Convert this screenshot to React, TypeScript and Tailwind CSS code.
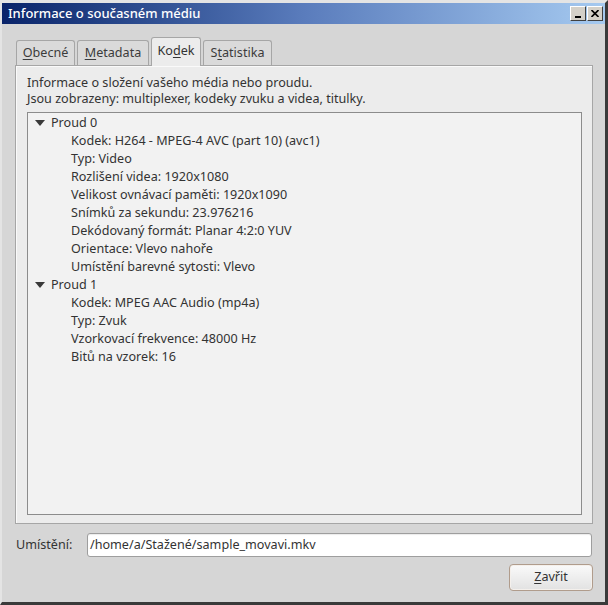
import React from "react";

const font = { fontFamily: '"Noto Sans", "DejaVu Sans", sans-serif' };

function Tab({ label, selected }: { label: [string, string, string]; selected?: boolean }) {
  const [a, b, c] = label;
  if (selected) {
    return (
      <div className="relative z-10 flex h-[29px] w-[50px] items-center justify-center rounded-t-[3px] border border-b-0 border-[#a6a6a6] bg-[#ececec] pb-[2px] text-[#333]">
        <span>
          {a}
          <span className="underline underline-offset-2">{b}</span>
          {c}
        </span>
      </div>
    );
  }
  return (
    <div className="flex h-[26px] items-center justify-center rounded-t-[3px] border border-b-0 border-[#a6a6a6] bg-[#dadada] px-[6px] text-[#3c3c3c]">
      <span>
        {a}
        <span className="underline underline-offset-2">{b}</span>
        {c}
      </span>
    </div>
  );
}

function Tri() {
  return (
    <svg width="10" height="6" viewBox="0 0 10 6" className="mr-[6px]">
      <path d="M0 0 L10 0 L5 6 Z" fill="#3a3a3a" />
    </svg>
  );
}

const stream0 = [
  "Kodek: H264 - MPEG-4 AVC (part 10) (avc1)",
  "Typ: Video",
  "Rozlišení videa: 1920x1080",
  "Velikost ovnávací paměti: 1920x1090",
  "Snímků za sekundu: 23.976216",
  "Dekódovaný formát: Planar 4:2:0 YUV",
  "Orientace: Vlevo nahoře",
  "Umístění barevné sytosti: Vlevo",
];
const stream1 = [
  "Kodek: MPEG AAC Audio (mp4a)",
  "Typ: Zvuk",
  "Vzorkovací frekvence: 48000 Hz",
  "Bitů na vzorek: 16",
];

export default function App() {
  return (
    <div
      style={font}
      className="flex h-[605px] w-[608px] flex-col border-b-[3px] border-l-[2px] border-r-[3px] border-t-[3px] border-b-[#3a3a3a] border-l-[#e4e4e4] border-r-[#3a3a3a] border-t-[#e4e4e4] bg-[#d6d6d6] text-[12.6px] text-[#333]"
    >
      {/* title bar */}
      <div className="flex h-[21px] shrink-0 items-center justify-between bg-gradient-to-r from-[#0a246a] via-[#5a7cbc] to-[#a6caf0] pl-[6px] pr-[2px]">
        <span className="text-[13px] font-medium leading-none text-white">Informace o současném médiu</span>
        <div className="flex gap-[1px]">
          <div className="flex h-[15px] w-[16px] items-end justify-center border border-b-[#404040] border-l-white border-r-[#404040] border-t-white bg-[#d4d0c8] pb-[2px]">
            <div className="h-[2px] w-[6px] bg-black" />
          </div>
          <div className="flex h-[15px] w-[16px] items-center justify-center border border-b-[#404040] border-l-white border-r-[#404040] border-t-white bg-[#d4d0c8]">
            <svg width="8" height="7" viewBox="0 0 8 7">
              <path d="M0.5 0 L7.5 7 M7.5 0 L0.5 7" stroke="black" strokeWidth="1.6" />
            </svg>
          </div>
        </div>
      </div>

      {/* body */}
      <div className="flex flex-1 flex-col pl-[13px] pr-[12px] pt-[13px]">
        <div className="flex items-end gap-[2px] pl-[1px]">
          <div className="w-[59px]">
            <Tab label={["", "O", "becné"]} />
          </div>
          <div className="w-[72px]">
            <Tab label={["", "M", "etadata"]} />
          </div>
          <Tab label={["Ko", "d", "ek"]} selected />
          <div className="w-[69px]">
            <Tab label={["S", "t", "atistika"]} />
          </div>
        </div>
        <div className="-mt-[1px] flex h-[459px] flex-col border border-[#a6a6a6] bg-[#ececec] pb-[8px] pl-[11px] pr-[10px] pt-[9px] shadow-[inset_1px_1px_0_#fafafa]">
          <div className="leading-[16px]">
            <div>Informace o složení vašeho média nebo proudu.</div>
            <div>Jsou zobrazeny: multiplexer, kodeky zvuku a videa, titulky.</div>
          </div>
          <div className="mt-[5px] flex-1 border border-[#8c8c8c] bg-[#f2f2f2] pl-[7px] pt-[1px] leading-[18px]">
            <div className="flex items-center">
              <Tri />
              <span>Proud 0</span>
            </div>
            {stream0.map((t) => (
              <div key={t} className="pl-[36px]">
                {t}
              </div>
            ))}
            <div className="flex items-center">
              <Tri />
              <span>Proud 1</span>
            </div>
            {stream1.map((t) => (
              <div key={t} className="pl-[36px]">
                {t}
              </div>
            ))}
          </div>
        </div>

        <div className="mt-[9px] flex items-center">
          <span className="w-[72px] pl-[1px]">Umístění:</span>
          <div className="mr-[1px] flex h-[24px] flex-1 items-center rounded-[3px] border border-[#9e9e9e] bg-white pl-[2px] shadow-[inset_0_1px_1px_rgba(0,0,0,0.08)]">
            /home/a/Stažené/sample_movavi.mkv
          </div>
        </div>
        <div className="mt-[7px] flex justify-end">
          <div className="flex h-[27px] w-[84px] items-center justify-center rounded-[4px] border border-[#b09c8c] bg-gradient-to-b from-[#fafafa] to-[#e2e2e2] shadow-[inset_0_0_0_1px_#f4f0ec]">
            <span>
              <span className="underline underline-offset-2">Z</span>avřit
            </span>
          </div>
        </div>
      </div>
    </div>
  );
}
